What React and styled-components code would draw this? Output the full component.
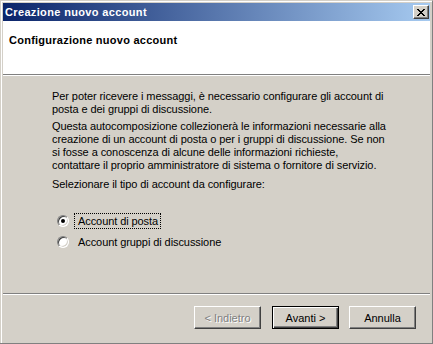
import React from "react";
import styled, { createGlobalStyle, css } from "styled-components";

const GlobalStyle = createGlobalStyle`
  html, body {
    margin: 0;
    padding: 0;
    background: #d4d0c8;
    overflow: hidden;
  }
  body {
    font-family: "Liberation Sans", Arial, sans-serif;
    font-size: 11px;
    color: #000;
  }
`;

const Window = styled.div`
  width: 433px;
  height: 344px;
  box-sizing: border-box;
  background: #d4d0c8;
  border-style: solid;
  border-width: 1px 1px 1px 0;
  border-color: #d4d0c8 #808080 #808080 #d4d0c8;
  display: flex;
`;

const Frame = styled.div`
  flex: 1;
  display: flex;
  flex-direction: column;
  border-top: 1px solid #fff;
  border-left: 1px solid #fff;
  padding: 1px 2px 2px 1px;
  margin-left: 1px;
`;

const TitleBar = styled.div`
  height: 18px;
  flex-shrink: 0;
  display: flex;
  align-items: center;
  justify-content: space-between;
  padding: 0 1px 0 2px;
  background: linear-gradient(to right, #0a246a, #a6caf0);
  color: #fff;
  font-weight: bold;
  font-size: 11px;
  letter-spacing: 0.35px;
`;

const CloseButton = styled.button`
  width: 16px;
  height: 14px;
  padding: 0;
  box-sizing: border-box;
  background: #d4d0c8;
  border: 1px solid;
  border-color: #fff #404040 #404040 #fff;
  box-shadow: inset -1px -1px #808080;
  display: flex;
  align-items: center;
  justify-content: center;
`;

const Header = styled.div`
  height: 54px;
  flex-shrink: 0;
  background: #fff;
  padding: 13px 0 0 6px;
  box-sizing: border-box;
  font-weight: bold;
  line-height: 13px;
  letter-spacing: 0.25px;
  border-bottom: 1px solid #808080;
`;

const Separator = styled.div`
  height: 0;
  border-top: 1px solid ${({ $dark }) => ($dark ? "#808080" : "#fff")};
`;

const Body = styled.div`
  flex: 1;
  padding: 14px 0 0 49px;
  line-height: 13px;
  letter-spacing: -0.08px;
`;

const Para = styled.p`
  margin: 0 0 ${({ $after }) => $after}px;
`;

const RadioGroup = styled.div`
  margin-top: 22px;
  padding-left: 5px;
  display: flex;
  flex-direction: column;
  gap: 6px;
`;

const RadioRow = styled.label`
  display: flex;
  align-items: center;
  gap: 5px;
  height: 15px;
`;

const RadioCircle = styled.span`
  width: 12px;
  height: 12px;
  box-sizing: border-box;
  border-radius: 50%;
  border: 1px solid;
  border-color: #808080 #fff #fff #808080;
  background: #fff;
  box-shadow: inset 1px 1px #404040, inset -1px -1px #d4d0c8;
  position: relative;
  flex-shrink: 0;
  ${({ $checked }) =>
    $checked &&
    css`
      &::after {
        content: "";
        position: absolute;
        left: 3px;
        top: 3px;
        width: 4px;
        height: 4px;
        border-radius: 50%;
        background: #000;
      }
    `}
`;

const RadioLabel = styled.span`
  padding: 1px 2px 0 3px;
  height: 13px;
  line-height: 13px;
  border: 1px dotted ${({ $focused }) => ($focused ? "#000" : "transparent")};
`;

const Footer = styled.div`
  height: 46px;
  flex-shrink: 0;
  display: flex;
  justify-content: flex-end;
  align-items: flex-start;
  padding: 11px 14px 0 0;
  box-sizing: border-box;
  gap: 10px;
`;

const Button = styled.button`
  width: 67px;
  height: 23px;
  box-sizing: border-box;
  padding: 0;
  font-family: "Liberation Sans", Arial, sans-serif;
  font-size: 11px;
  background: #d4d0c8;
  color: #000;
  border: 1px solid;
  border-color: #fff #404040 #404040 #fff;
  box-shadow: inset -1px -1px #808080;
  &:first-child {
    margin-right: 1px;
  }
  ${({ $default }) =>
    $default &&
    css`
      border-color: #000;
      box-shadow: inset 1px 1px #fff, inset -1px -1px #404040,
        inset -2px -2px #808080;
    `}
  &:disabled {
    color: #808080;
    text-shadow: 1px 1px #fff;
  }
`;

const CloseIcon = () => (
  <svg width="8" height="7" viewBox="0 0 8 7" shapeRendering="crispEdges">
    <path
      fill="#000"
      d="M0 0h2v1H0zM6 0h2v1H6zM1 1h2v1H1zM5 1h2v1H5zM2 2h4v1H2zM3 3h2v1H3zM2 4h4v1H2zM1 5h2v1H1zM5 5h2v1H5zM0 6h2v1H0zM6 6h2v1H6z"
    />
  </svg>
);

export default function App() {
  return (
    <>
      <GlobalStyle />
      <Window>
        <Frame>
          <TitleBar>
            <span>Creazione nuovo account</span>
            <CloseButton>
              <CloseIcon />
            </CloseButton>
          </TitleBar>
          <Header>Configurazione nuovo account</Header>
          <Separator />
          <Body>
            <Para $after={4}>
              Per poter ricevere i messaggi, è necessario configurare gli account di
              <br />
              posta e dei gruppi di discussione.
            </Para>
            <Para $after={6}>
              Questa autocomposizione collezionerà le informazioni necessarie alla
              <br />
              creazione di un account di posta o per i gruppi di discussione. Se non
              <br />
              si fosse a conoscenza di alcune delle informazioni richieste,
              <br />
              contattare il proprio amministratore di sistema o fornitore di servizio.
            </Para>
            <Para $after={0}>Selezionare il tipo di account da configurare:</Para>
            <RadioGroup>
              <RadioRow>
                <RadioCircle $checked />
                <RadioLabel $focused>Account di posta</RadioLabel>
              </RadioRow>
              <RadioRow>
                <RadioCircle />
                <RadioLabel>Account gruppi di discussione</RadioLabel>
              </RadioRow>
            </RadioGroup>
          </Body>
          <Separator $dark />
          <Separator />
          <Footer>
            <Button disabled>&lt; Indietro</Button>
            <Button $default>Avanti &gt;</Button>
            <Button>Annulla</Button>
          </Footer>
        </Frame>
      </Window>
    </>
  );
}
